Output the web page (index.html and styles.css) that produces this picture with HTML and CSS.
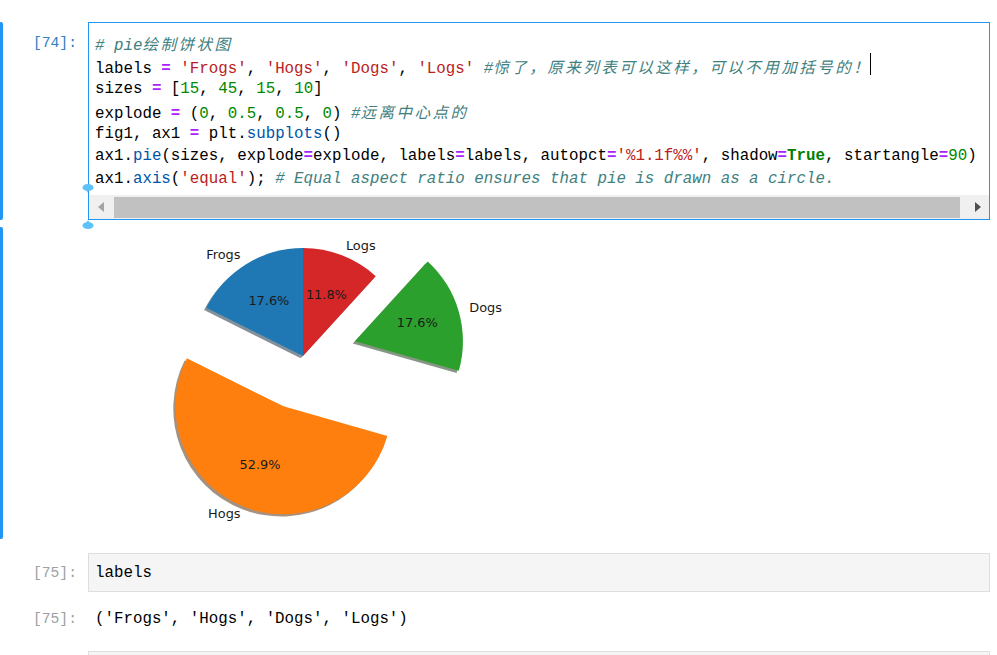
FILE: index.html
```html
<!DOCTYPE html>
<html>
<head>
<meta charset="utf-8">
<link rel="stylesheet" href="styles.css">
</head>
<body>
<div class="notebook">
  <div class="cell">
    <div class="row">
      <div class="collapser active"></div>
      <div class="prompt prompt-active">[74]:</div>
      <div class="editor editor-active">
        <div class="code"><div class="line"><span class="cm"># pie<span class="cjk">绘制饼状图</span></span></div><div class="line">labels <span class="op">=</span> <span class="str">'Frogs'</span>, <span class="str">'Hogs'</span>, <span class="str">'Dogs'</span>, <span class="str">'Logs'</span> <span class="cm">#<span class="cjk">惊了，原来列表可以这样，可以不用加括号的！</span></span><span class="cursor"></span></div><div class="line">sizes <span class="op">=</span> [<span class="num">15</span>, <span class="num">45</span>, <span class="num">15</span>, <span class="num">10</span>]</div><div class="line">explode <span class="op">=</span> (<span class="num">0</span>, <span class="num">0.5</span>, <span class="num">0.5</span>, <span class="num">0</span>) <span class="cm">#<span class="cjk">远离中心点的</span></span></div><div class="line">fig1, ax1 <span class="op">=</span> plt.<span class="prop">subplots</span>()</div><div class="line">ax1.<span class="prop">pie</span>(sizes, explode<span class="op">=</span>explode, labels<span class="op">=</span>labels, autopct<span class="op">=</span><span class="str">'%1.1f%%'</span>, shadow<span class="op">=</span><span class="kw">True</span>, startangle<span class="op">=</span><span class="num">90</span>)</div><div class="line">ax1.<span class="prop">axis</span>(<span class="str">'equal'</span>); <span class="cm"># Equal aspect ratio ensures that pie is drawn as a circle.</span></div></div>
        <div class="scrollbar">
          <div class="sb-btn sb-left"><span class="tri-left"></span></div>
          <div class="sb-thumb"></div>
          <div class="sb-btn sb-right"><span class="tri-right"></span></div>
        </div>
        <svg class="handle handle-top" width="12" height="11" viewBox="0 0 12 11"><path d="M4.5 6 L6 10 L7.5 6 Z" fill="#1e90e6"/><ellipse cx="6" cy="4.5" rx="5.5" ry="3.6" fill="#5cc2f7"/></svg>
        <svg class="handle handle-bottom" width="12" height="11" viewBox="0 0 12 11"><path d="M4.5 5 L6 1 L7.5 5 Z" fill="#1e90e6"/><ellipse cx="6" cy="6.5" rx="5.5" ry="3.6" fill="#5cc2f7"/></svg>
      </div>
    </div>
    <div class="row out-row">
      <div class="collapser active"></div>
      <div class="prompt"></div>
      <div class="output-image">
        <svg width="440" height="312" viewBox="0 0 440 312" font-family="DejaVu Sans, sans-serif" font-size="12.9">
          <g transform="translate(62,4)">
            <g transform="translate(-2.2,2.2)" opacity="0.5">
              <path d="M153,125 L153,17 A108,108 0 0 0 56.32,76.86 Z" fill="rgb(9,36,54)"/>
              <path d="M133.49,175.35 L36.81,127.21 A108,108 0 1 0 237.37,204.91 Z" fill="rgb(76,38,4)"/>
              <path d="M204.94,110.22 L308.82,139.78 A108,108 0 0 0 277.70,30.41 Z" fill="rgb(13,48,13)"/>
              <path d="M153,125 L225.76,45.19 A108,108 0 0 0 153,17 Z" fill="rgb(64,12,12)"/>
            </g>
            <path d="M153,125 L153,17 A108,108 0 0 0 56.32,76.86 Z" fill="#1f77b4"/>
            <path d="M133.49,175.35 L36.81,127.21 A108,108 0 1 0 237.37,204.91 Z" fill="#ff7f0e"/>
            <path d="M204.94,110.22 L308.82,139.78 A108,108 0 0 0 277.70,30.41 Z" fill="#2ca02c"/>
            <path d="M153,125 L225.76,45.19 A108,108 0 0 0 153,17 Z" fill="#d62728"/>
            <g fill="#1a1a1a">
              <text x="90.46" y="27.5" text-anchor="end">Frogs</text>
              <text x="195.92" y="18.5">Logs</text>
              <text x="319.21" y="81">Dogs</text>
              <text x="90.57" y="286.6" text-anchor="end">Hogs</text>
              <text x="118.89" y="73.8" text-anchor="middle">17.6%</text>
              <text x="176.41" y="68.4" text-anchor="middle">11.8%</text>
              <text x="267.27" y="96" text-anchor="middle">17.6%</text>
              <text x="110.08" y="238.2" text-anchor="middle">52.9%</text>
            </g>
          </g>
        </svg>
      </div>
    </div>
  </div>

  <div class="cell cell-2">
    <div class="row">
      <div class="collapser"></div>
      <div class="prompt">[75]:</div>
      <div class="editor">
        <div class="code code-short"><div class="line">labels</div></div>
      </div>
    </div>
    <div class="row out-text-row">
      <div class="collapser"></div>
      <div class="prompt prompt-out">[75]:</div>
      <div class="output-text">('Frogs', 'Hogs', 'Dogs', 'Logs')</div>
    </div>
  </div>

  <div class="cell cell-3">
    <div class="row">
      <div class="collapser"></div>
      <div class="prompt"></div>
      <div class="editor editor-empty"></div>
    </div>
  </div>
</div>
</body>
</html>
```

FILE: styles.css
```css
html, body {
  margin: 0;
  padding: 0;
  background: #ffffff;
  overflow: hidden;
}

body {
  font-family: "Liberation Mono", "DejaVu Sans Mono", monospace;
  color: #000;
}

.notebook {
  padding: 22px 7px 0 0;
}

.row {
  display: flex;
  align-items: stretch;
}

.collapser {
  width: 3px;
  flex: 0 0 3px;
  border-radius: 0 2px 2px 0;
}

.collapser.active {
  background: #2196f3;
}

.prompt {
  flex: 0 0 85px;
  box-sizing: border-box;
  padding: 10.2px 11px 0 0;
  text-align: right;
  font-size: 14.7px;
  line-height: 22.6px;
  color: #a0a0a0;
  white-space: pre;
}

.prompt-active {
  color: #307fc1;
}

.editor {
  flex: 1;
  min-width: 0;
  position: relative;
  border: 1px solid #dedede;
  background: #f5f5f5;
}

.editor-active {
  border-color: #2196f3;
  background: #ffffff;
}

.code {
  padding: 9.4px 0 4.6px 6px;
  font-size: 15.8px;
  line-height: 22.6px;
  white-space: pre;
  overflow: hidden;
}

.code-short {
  padding: 8.3px 0 6.1px 6px;
}

.line {
  height: 22.6px;
}

.cm {
  color: #408080;
  font-style: italic;
}

.cjk {
  font-family: "Noto Sans CJK SC", sans-serif;
  font-size: 15.5px;
  letter-spacing: 2.5px;
}

.op {
  color: #aa22ff;
  font-weight: bold;
}

.str {
  color: #ba2121;
}

.num {
  color: #008800;
}

.kw {
  color: #008000;
  font-weight: bold;
}

.prop {
  color: #0055aa;
}

.cursor {
  display: inline-block;
  width: 0;
  height: 22px;
  border-left: 1px solid #000;
  vertical-align: top;
  margin-left: -1px;
  position: relative;
  top: -1.7px;
}

.scrollbar {
  display: flex;
  height: 24px;
  background: #f0f0f0;
}

.sb-btn {
  display: flex;
  align-items: center;
  justify-content: flex-start;
  box-sizing: border-box;
}

.sb-left {
  width: 25px;
  padding-left: 9px;
}

.sb-right {
  width: 29px;
  padding-left: 15px;
}

.sb-thumb {
  flex: 1;
  background: #c1c1c1;
  margin: 2px 0 1px;
}

.tri-left {
  width: 0;
  height: 0;
  border-top: 5.5px solid transparent;
  border-bottom: 5.5px solid transparent;
  border-right: 6px solid #a3a3a3;
}

.tri-right {
  width: 0;
  height: 0;
  border-top: 5.5px solid transparent;
  border-bottom: 5.5px solid transparent;
  border-left: 6px solid #505050;
}

.handle {
  position: absolute;
  left: -7px;
}

.handle-top {
  top: 160px;
}

.handle-bottom {
  bottom: -11px;
}

.out-row {
  margin-top: 7px;
  height: 312px;
}

.output-image {
  flex: 1;
  line-height: 0;
}

.output-image svg {
  display: block;
}

.cell-2 {
  margin-top: 14px;
}

.cell-2 .prompt {
  padding-top: 9.2px;
}

.out-text-row {
  margin-top: 16px;
}

.cell-2 .out-text-row .prompt {
  padding-top: 0;
}

.output-text {
  flex: 1;
  padding-left: 7px;
  font-size: 15.8px;
  line-height: 22.6px;
  white-space: pre;
  color: #000;
}

.cell-3 {
  margin-top: 20px;
}

.editor-empty {
  height: 40px;
}
```
